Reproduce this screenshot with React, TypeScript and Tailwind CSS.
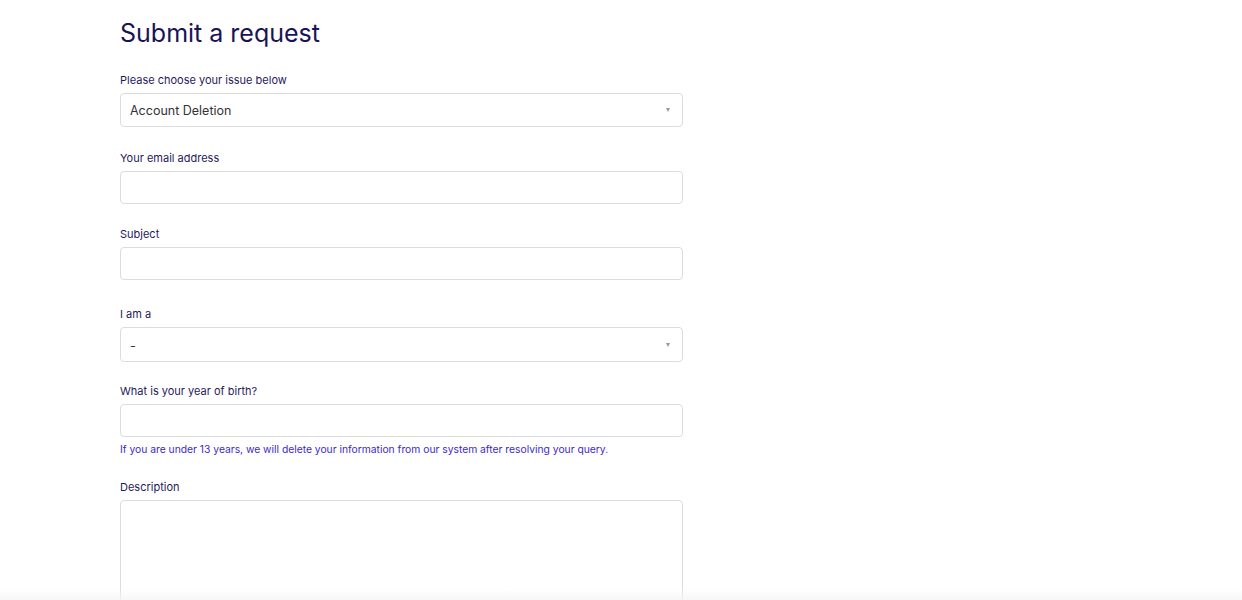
export default function App() {
  const label = 'block text-[11px] leading-[14px] text-[#1f1a5c] mb-[6px]'
  const box = 'block w-[563px] rounded-[4px] border border-[#dcdcdc] bg-white'
  const caret = 'w-0 h-0 border-l-[2.5px] border-r-[2.5px] border-t-[4px] border-l-transparent border-r-transparent border-t-[#999] mr-[3px]'
  return (
    <div className="relative min-h-[600px] h-[600px] overflow-hidden bg-white font-['Inter','Liberation_Sans',sans-serif]">
      <div className="pl-[120px] pt-[17px]">
        <h1 className="text-[25px] leading-[32px] text-[#1a1456] font-normal mb-[24px]">Submit a request</h1>

        <label className={label}>Please choose your issue below</label>
        <div className={`${box} h-[34px] flex items-center justify-between px-[9px]`}>
          <span className="text-[12.5px] text-[#333] pt-[3px]">Account Deletion</span>
          <span className={caret} />
        </div>

        <label className={`${label} mt-[24px]`}>Your email address</label>
        <div className={`${box} h-[33px]`} />

        <label className={`${label} mt-[23px]`}>Subject</label>
        <div className={`${box} h-[33px]`} />

        <label className={`${label} mt-[27px]`}>I am a</label>
        <div className={`${box} h-[35px] flex items-center justify-between px-[9px]`}>
          <span className="text-[12.5px] text-[#333] pt-[3px]">-</span>
          <span className={caret} />
        </div>

        <label className={`${label} mt-[22px]`}>What is your year of birth?</label>
        <div className={`${box} h-[33px]`} />
        <p className="text-[10.3px] leading-[14px] text-[#3b2ac9] mt-[5px]">
          If you are under 13 years, we will delete your information from our system after resolving your query.
        </p>

        <label className={`${label} mt-[24px]`}>Description</label>
        <div className={`${box} h-[120px]`} />
      </div>
      <div className="absolute left-0 right-0 bottom-0 h-[12px] bg-gradient-to-b from-white/0 to-[#f5f5f5]/80" />
    </div>
  )
}
